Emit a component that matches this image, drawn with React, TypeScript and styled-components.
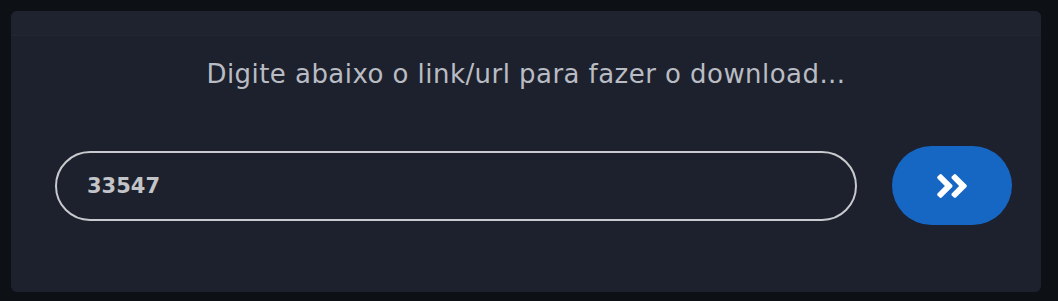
import styled, {createGlobalStyle} from "styled-components";
import {FaAngleDoubleRight} from "react-icons/fa";

const GlobalStyle = createGlobalStyle`
    html, body {
        margin: 0;
        padding: 0;
        background-color: #0d1116;
        font-family: "DejaVu Sans", "Open Sans", sans-serif;
    }
`;

const App = () => {
    return (
        <>
            <GlobalStyle/>
            <Page>
                <Card>
                    <CardTop/>
                    <Title>Digite abaixo o link/url para fazer o download...</Title>
                    <Form onSubmit={(e) => e.preventDefault()}>
                        <UrlInput type="text" defaultValue="33547"/>
                        <SendButton type="submit" aria-label="download">
                            <FaAngleDoubleRight/>
                        </SendButton>
                    </Form>
                </Card>
            </Page>
        </>
    );
};

export default App;

const Page = styled.div`
    width: 1058px;
    height: 301px;
    padding: 11px 17px 9px 11px;
    box-sizing: border-box;
`;

const Card = styled.div`
    height: 100%;
    background-color: #1d212d;
    border-radius: 6px;
    display: flex;
    flex-direction: column;
`;

const CardTop = styled.div`
    height: 24px;
    background-color: #1f2330;
    border-bottom: 1px solid #222633;
    border-radius: 6px 6px 0 0;
`;

const Title = styled.h1`
    margin: 22px 0 0;
    text-align: center;
    font-family: "DejaVu Sans", sans-serif;
    font-weight: 400;
    font-size: 26px;
    letter-spacing: 0.45px;
    line-height: 32px;
    color: #b9bcc3;
`;

const Form = styled.form`
    display: flex;
    align-items: center;
    gap: 35px;
    margin: 56px 29px 0 44px;
`;

const UrlInput = styled.input`
    flex: 1;
    height: 70px;
    box-sizing: border-box;
    border: 2px solid #c9cacd;
    border-radius: 35px;
    background: transparent;
    padding: 0 30px;
    font-family: "DejaVu Sans", sans-serif;
    font-weight: 700;
    font-size: 21px;
    color: #c3c4c7;
    outline: none;
`;

const SendButton = styled.button`
    width: 120px;
    height: 79px;
    border: none;
    border-radius: 40px;
    background-color: #1666c3;
    color: #ffffff;
    display: flex;
    align-items: center;
    justify-content: center;
    font-size: 38px;
    cursor: pointer;
    padding: 0;
`;
